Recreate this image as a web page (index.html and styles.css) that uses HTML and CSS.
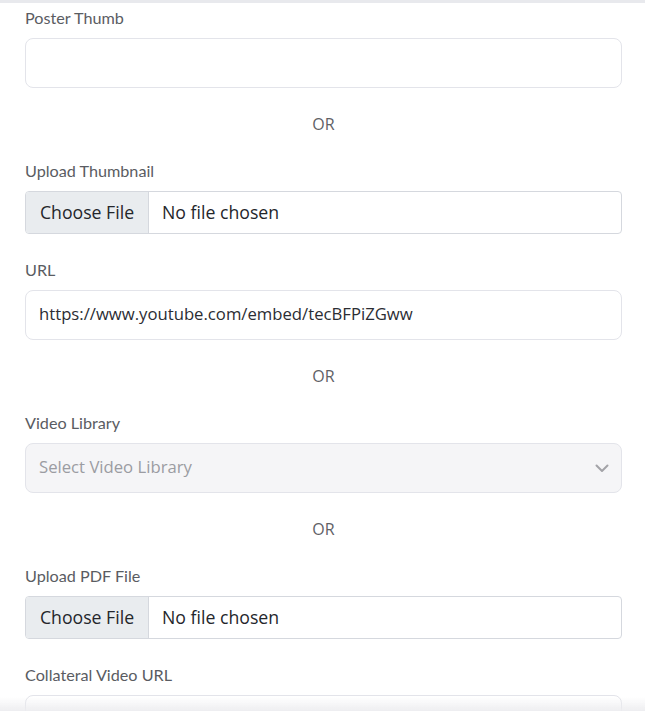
FILE: index.html
```html
<!DOCTYPE html>
<html>
<head>
<meta charset="utf-8">
<link rel="stylesheet" href="styles.css">
</head>
<body>
<div class="topbar"></div>
<form class="form">
  <div class="group">
    <label class="label">Poster Thumb</label>
    <div class="input"></div>
  </div>
  <div class="or">OR</div>
  <div class="group">
    <label class="label">Upload Thumbnail</label>
    <div class="file"><span class="file-btn">Choose File</span><span class="file-name">No file chosen</span></div>
  </div>
  <div class="group">
    <label class="label">URL</label>
    <div class="input"><span class="value">https://www.youtube.com/embed/tecBFPiZGww</span></div>
  </div>
  <div class="or">OR</div>
  <div class="group">
    <label class="label">Video Library</label>
    <div class="input select"><span class="placeholder">Select Video Library</span>
      <svg class="chev" width="14" height="9" viewBox="0 0 14 9"><path d="M1.5 1.5 L7 7 L12.5 1.5" fill="none" stroke="#a3a3a8" stroke-width="2" stroke-linecap="round" stroke-linejoin="round"/></svg>
    </div>
  </div>
  <div class="or">OR</div>
  <div class="group">
    <label class="label">Upload PDF File</label>
    <div class="file"><span class="file-btn">Choose File</span><span class="file-name">No file chosen</span></div>
  </div>
  <div class="group">
    <label class="label">Collateral Video URL</label>
    <div class="input"></div>
  </div>
</form>
<div class="bottom-shade"></div>
</body>
</html>
```
FILE: styles.css
```css
html, body {
  margin: 0;
  padding: 0;
  background: #ffffff;
  overflow: hidden;
  height: 711px;
}
body {
  font-family: "Open Sans", "Lato", sans-serif;
}
.topbar {
  height: 3px;
  background: #e8e9ed;
}
.form {
  padding: 5px 23px 0 25px;
  display: flex;
  flex-direction: column;
}
.group {
  display: flex;
  flex-direction: column;
  margin-bottom: 26px;
}
.label {
  font-family: "Lato", sans-serif;
  font-size: 16.2px;
  line-height: 20px;
  color: #5a5c62;
  margin-bottom: 10px;
}
.input {
  box-sizing: border-box;
  height: 50px;
  border: 1px solid #e3e4ea;
  border-radius: 8px;
  background: #fff;
  display: flex;
  align-items: center;
  padding: 0 13px 3px 13px;
  font-size: 16.7px;
  color: #2b2d33;
}
.select {
  background: #f5f5f7;
  justify-content: space-between;
  padding-right: 12px;
}
.chev {
  margin-top: 3px;
}
.placeholder {
  color: #9b9ca2;
}
.or {
  text-align: center;
  font-size: 16px;
  line-height: 20px;
  color: #5f6166;
  margin-bottom: 27px;
}
.file {
  box-sizing: border-box;
  height: 43px;
  border: 1px solid #d5d8de;
  border-radius: 4px;
  display: flex;
  overflow: hidden;
  font-size: 17.7px;
  color: #24262b;
}
.file-btn {
  width: 123px;
  box-sizing: border-box;
  background: #e9ecef;
  border-right: 1px solid #d5d8de;
  display: flex;
  align-items: center;
  justify-content: center;
  padding-bottom: 2px;
}
.file-name {
  display: flex;
  align-items: center;
  padding-left: 13px;
  padding-bottom: 2px;
}
.bottom-shade {
  position: fixed;
  left: 0;
  right: 0;
  bottom: 0;
  height: 14px;
  background: linear-gradient(to bottom, rgba(240,240,242,0), rgba(236,236,239,0.9));
  pointer-events: none;
}
```
